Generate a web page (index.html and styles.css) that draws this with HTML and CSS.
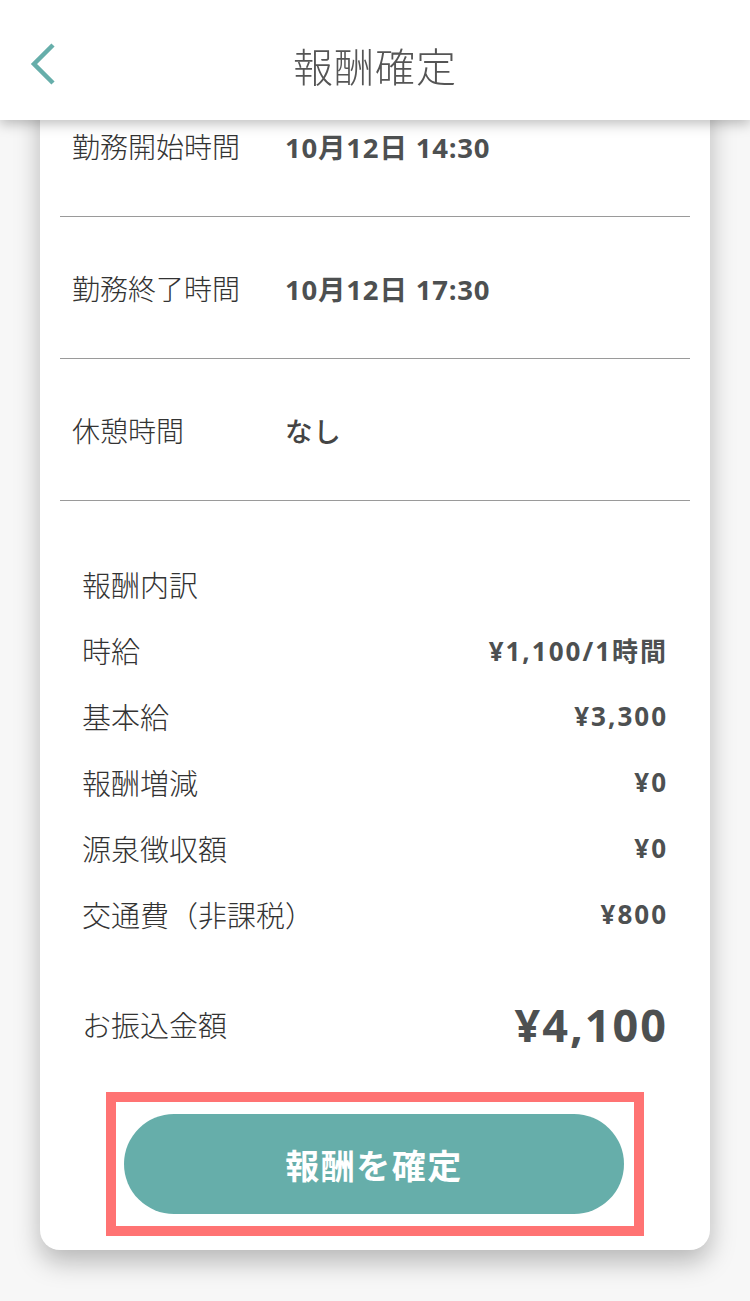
FILE: index.html
```html
<!DOCTYPE html>
<html lang="ja">
<head>
  <meta charset="UTF-8" />
  <meta name="viewport" content="width=device-width, initial-scale=1.0" />
  <title>報酬確定</title>
  <link rel="stylesheet" href="styles.css">
</head>
<body>

<header class="topbar">
  <button class="back" aria-label="戻る">
    <svg width="30" height="48" viewBox="0 0 30 48">
      <polyline points="25,5 6,24 25,43" fill="none" stroke="#66aeaa" stroke-width="4.5"/>
    </svg>
  </button>
  <h1 class="title">報酬確定</h1>
</header>

<main class="page">
  <div class="card">
    <div class="info-row">
      <div class="info-label">勤務開始時間</div>
      <div class="info-value">10月12日 14:30</div>
    </div>
    <div class="info-row">
      <div class="info-label">勤務終了時間</div>
      <div class="info-value">10月12日 17:30</div>
    </div>
    <div class="info-row">
      <div class="info-label">休憩時間</div>
      <div class="info-value plain">なし</div>
    </div>

    <div class="breakdown">
      <div class="line">
        <span class="line-label">報酬内訳</span>
      </div>
      <div class="line">
        <span class="line-label">時給</span>
        <span class="line-value">¥1,100/1時間</span>
      </div>
      <div class="line">
        <span class="line-label">基本給</span>
        <span class="line-value">¥3,300</span>
      </div>
      <div class="line">
        <span class="line-label">報酬増減</span>
        <span class="line-value">¥0</span>
      </div>
      <div class="line">
        <span class="line-label">源泉徴収額</span>
        <span class="line-value">¥0</span>
      </div>
      <div class="line">
        <span class="line-label">交通費（非課税）</span>
        <span class="line-value">¥800</span>
      </div>

      <div class="total">
        <span class="line-label">お振込金額</span>
        <span class="total-value">¥4,100</span>
      </div>
    </div>

    <div class="highlight">
      <button class="confirm">報酬を確定</button>
    </div>
  </div>
</main>

</body>
</html>
```

FILE: styles.css
```css
body {
  margin: 0;
  font-family: "Noto Sans CJK JP", sans-serif;
  background: #f7f7f7;
  color: #333;
}
.topbar {
  position: fixed;
  top: 0;
  left: 0;
  right: 0;
  height: 120px;
  z-index: 10;
  background: white;
  box-shadow: 0 4px 12px rgba(0,0,0,0.25);
  display: flex;
  align-items: center;
  justify-content: center;
}
.back {
  position: absolute;
  left: 28px;
  top: 40px;
  padding: 0;
  background: none;
  border: none;
  cursor: pointer;
}
.back svg {
  display: block;
}
.title {
  margin: 0;
  padding-top: 10px;
  font-size: 40px;
  font-weight: 300;
  color: #555;
  letter-spacing: 1px;
}
.page {
  padding: 55px 40px 51px;
}
.card {
  background: white;
  border-radius: 20px;
  padding: 20px 20px 14px;
  box-shadow: 0 12px 26px rgba(0,0,0,0.26);
}
.info-row {
  height: 142px;
  box-sizing: border-box;
  padding: 0 12px;
  display: flex;
  align-items: center;
  border-bottom: 1px solid #9a9a9a;
}
.info-label {
  width: 213px;
  flex-shrink: 0;
  font-size: 28px;
  font-weight: 300;
}
.info-value {
  font-family: "Open Sans", "Noto Sans CJK JP", sans-serif;
  font-size: 27.5px;
  font-weight: 700;
  color: #4d5051;
  letter-spacing: 0.8px;
}
.info-value.plain {
  font-family: "Noto Sans CJK JP", sans-serif;
  font-weight: 500;
  color: #444;
}
.breakdown {
  padding: 50px 22px 0;
}
.line {
  height: 66px;
  display: flex;
  align-items: center;
  justify-content: space-between;
}
.line-label {
  font-size: 29px;
  font-weight: 300;
}
.line-value {
  font-family: "Open Sans", "Noto Sans CJK JP", sans-serif;
  font-size: 26px;
  font-weight: 700;
  color: #4d5051;
  letter-spacing: 2px;
}
.total {
  margin-top: 37px;
  height: 80px;
  display: flex;
  align-items: center;
  justify-content: space-between;
}
.total-value {
  font-family: "Open Sans", sans-serif;
  font-size: 45px;
  font-weight: 700;
  color: #4d5051;
  letter-spacing: 2px;
}
.highlight {
  width: 538px;
  box-sizing: border-box;
  margin: 28px auto 0;
  border: 10px solid #ff7373;
  padding: 12px 10px 12px 8px;
}
.confirm {
  display: block;
  width: 100%;
  height: 100px;
  border: none;
  border-radius: 50px;
  background: #66aeaa;
  color: white;
  font-family: "Noto Sans CJK JP", sans-serif;
  font-size: 34px;
  font-weight: 700;
  letter-spacing: 1.5px;
  cursor: pointer;
}
```
